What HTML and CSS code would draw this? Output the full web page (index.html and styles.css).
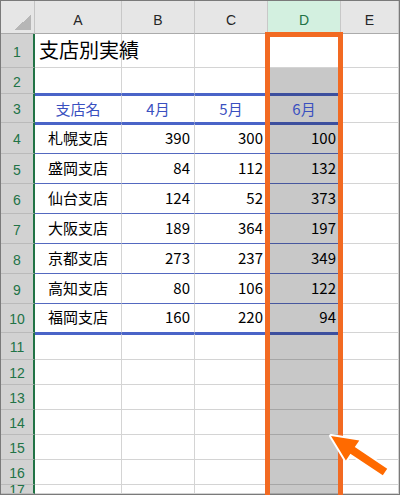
FILE: index.html
```html
<!DOCTYPE html>
<html lang="ja">
<head>
<meta charset="utf-8">
<title>支店別実績</title>
<link rel="stylesheet" href="styles.css">
</head>
<body>
<div class="page">
  <div class="sheet">
    <!-- header row -->
    <div class="corner"></div>
    <div class="ch">A</div>
    <div class="ch">B</div>
    <div class="ch">C</div>
    <div class="ch act">D</div>
    <div class="ch">E</div>

    <!-- row 1 -->
    <div class="rh">1</div>
    <div class="c title">支店別実績</div>
    <div class="c"></div>
    <div class="c"></div>
    <div class="c"></div>
    <div class="c"></div>

    <!-- row 2 -->
    <div class="rh">2</div>
    <div class="c bb"></div>
    <div class="c bb"></div>
    <div class="c bb"></div>
    <div class="c sel bb"></div>
    <div class="c"></div>

    <!-- row 3 -->
    <div class="rh">3</div>
    <div class="c bt bb head">支店名</div>
    <div class="c bt bb head">4月</div>
    <div class="c bt bb head">5月</div>
    <div class="c sel bt bb head">6月</div>
    <div class="c"></div>

    <!-- row 4 -->
    <div class="rh">4</div>
    <div class="c bt tb name">札幌支店</div>
    <div class="c bt tb num">390</div>
    <div class="c bt tb num">300</div>
    <div class="c sel bt tb num">100</div>
    <div class="c"></div>

    <div class="rh">5</div>
    <div class="c tb name">盛岡支店</div>
    <div class="c tb num">84</div>
    <div class="c tb num">112</div>
    <div class="c sel tb num">132</div>
    <div class="c"></div>

    <div class="rh">6</div>
    <div class="c tb name">仙台支店</div>
    <div class="c tb num">124</div>
    <div class="c tb num">52</div>
    <div class="c sel tb num">373</div>
    <div class="c"></div>

    <div class="rh">7</div>
    <div class="c tb name">大阪支店</div>
    <div class="c tb num">189</div>
    <div class="c tb num">364</div>
    <div class="c sel tb num">197</div>
    <div class="c"></div>

    <div class="rh">8</div>
    <div class="c tb name">京都支店</div>
    <div class="c tb num">273</div>
    <div class="c tb num">237</div>
    <div class="c sel tb num">349</div>
    <div class="c"></div>

    <div class="rh">9</div>
    <div class="c tb name">高知支店</div>
    <div class="c tb num">80</div>
    <div class="c tb num">106</div>
    <div class="c sel tb num">122</div>
    <div class="c"></div>

    <div class="rh">10</div>
    <div class="c bb name">福岡支店</div>
    <div class="c bb num">160</div>
    <div class="c bb num">220</div>
    <div class="c sel bb num">94</div>
    <div class="c"></div>

    <div class="rh">11</div>
    <div class="c bt"></div>
    <div class="c bt"></div>
    <div class="c bt"></div>
    <div class="c sel bt"></div>
    <div class="c"></div>

    <div class="rh">12</div>
    <div class="c"></div><div class="c"></div><div class="c"></div><div class="c sel"></div><div class="c"></div>
    <div class="rh">13</div>
    <div class="c"></div><div class="c"></div><div class="c"></div><div class="c sel"></div><div class="c"></div>
    <div class="rh">14</div>
    <div class="c"></div><div class="c"></div><div class="c"></div><div class="c sel"></div><div class="c"></div>
    <div class="rh">15</div>
    <div class="c"></div><div class="c"></div><div class="c"></div><div class="c sel"></div><div class="c"></div>
    <div class="rh">16</div>
    <div class="c"></div><div class="c"></div><div class="c"></div><div class="c sel"></div><div class="c"></div>
    <div class="rh">17</div>
    <div class="c"></div><div class="c"></div><div class="c"></div><div class="c sel"></div><div class="c"></div>
  </div>

  <div class="mark"></div>

  <svg class="arrow" viewBox="0 0 400 495" width="400" height="495" aria-hidden="true">
    <polygon points="331,436 359.3,440.4 354.8,447.1 387.2,468.7 382.8,475.3 350.4,453.7 345.9,460.4"
      fill="#ff6a00" stroke="#ffffff" stroke-width="4" stroke-linejoin="round" paint-order="stroke"/>
  </svg>
</div>
</body>
</html>
```

FILE: styles.css
```css
html, body {
  margin: 0;
  padding: 0;
  background: #ffffff;
}

.page {
  position: relative;
  width: 400px;
  height: 495px;
  overflow: hidden;
}

.sheet {
  box-sizing: border-box;
  width: 400px;
  height: 495px;
  border: 1px solid #7a7a7a;
  display: grid;
  grid-template-columns: 34px 87px 73px 73px 73px 58px;
  grid-template-rows: 33px 34px 26px 29px 31px 30px 30px 30px 30px 30px 29px 27px 25px 25px 25px 25px 25px 9px;
  overflow: hidden;
  font-family: "Noto Sans CJK JP", "Liberation Sans", sans-serif;
  background: #ffffff;
}

.sheet > div {
  box-sizing: border-box;
  min-width: 0;
  min-height: 0;
  overflow: hidden;
  white-space: nowrap;
}

/* corner */
.corner {
  background:
    linear-gradient(to bottom right, transparent 50%, #b6b6b6 50%) no-repeat right 3px bottom 3px / 17px 15px,
    #e6e6e6;
  border-right: 1px solid #c4c4c4;
  border-bottom: 1px solid #ababab;
}

/* column headers */
.ch {
  background: #e6e6e6;
  border-right: 1px solid #c8c8c8;
  border-bottom: 1px solid #ababab;
  display: flex;
  align-items: center;
  justify-content: center;
  padding-top: 5px;
  font-family: "Liberation Sans", Arial, sans-serif;
  font-size: 14px;
  color: #262626;
}

.ch.act {
  background: #d3f0e0;
  color: #217346;
  border-bottom-color: #217346;
}

.ch:last-child {
  border-right: none;
}

/* row headers */
.rh {
  background: #d2d2d2;
  border-right: 2px solid #217346;
  border-bottom: 1px solid #bababa;
  display: flex;
  align-items: center;
  justify-content: center;
  padding-top: 2px;
  font-family: "Liberation Sans", Arial, sans-serif;
  font-size: 14px;
  color: #217346;
}

/* cells */
.c {
  border-right: 1px solid #d4d4d4;
  border-bottom: 1px solid #d4d4d4;
  display: flex;
  align-items: center;
  font-size: 15px;
  color: #000000;
  padding-bottom: 3px;
}

.c.sel {
  background: #c8c8c8;
  border-bottom-color: #a6a6a6;
  border-right-color: #a6a6a6;
}

.c.bt {
  border-top: 2px solid #4a64c8;
}

.c.bb {
  border-bottom: 1px solid #4a64c8;
}

.c.tb {
  border-bottom: 1px solid #5469c0;
}

.c.sel.bt {
  border-top-color: #3c4f9e;
}

.c.sel.bb {
  border-bottom-color: #3c4f9e;
}

.c.sel.tb {
  border-bottom-color: #47579e;
}

.title {
  font-size: 20px;
  padding-left: 4px;
  padding-bottom: 2px;
  overflow: visible !important;
}

.head {
  justify-content: center;
  color: #3a50c0;
  padding-bottom: 2px;
}

.name {
  padding-left: 13px;
}

.num {
  justify-content: flex-end;
  padding-right: 4px;
}

/* annotation overlays */
.mark {
  position: absolute;
  left: 265px;
  top: 32px;
  width: 78px;
  height: 480px;
  box-sizing: border-box;
  border: 5px solid #f26a22;
}

.arrow {
  position: absolute;
  left: 0;
  top: 0;
}
```
